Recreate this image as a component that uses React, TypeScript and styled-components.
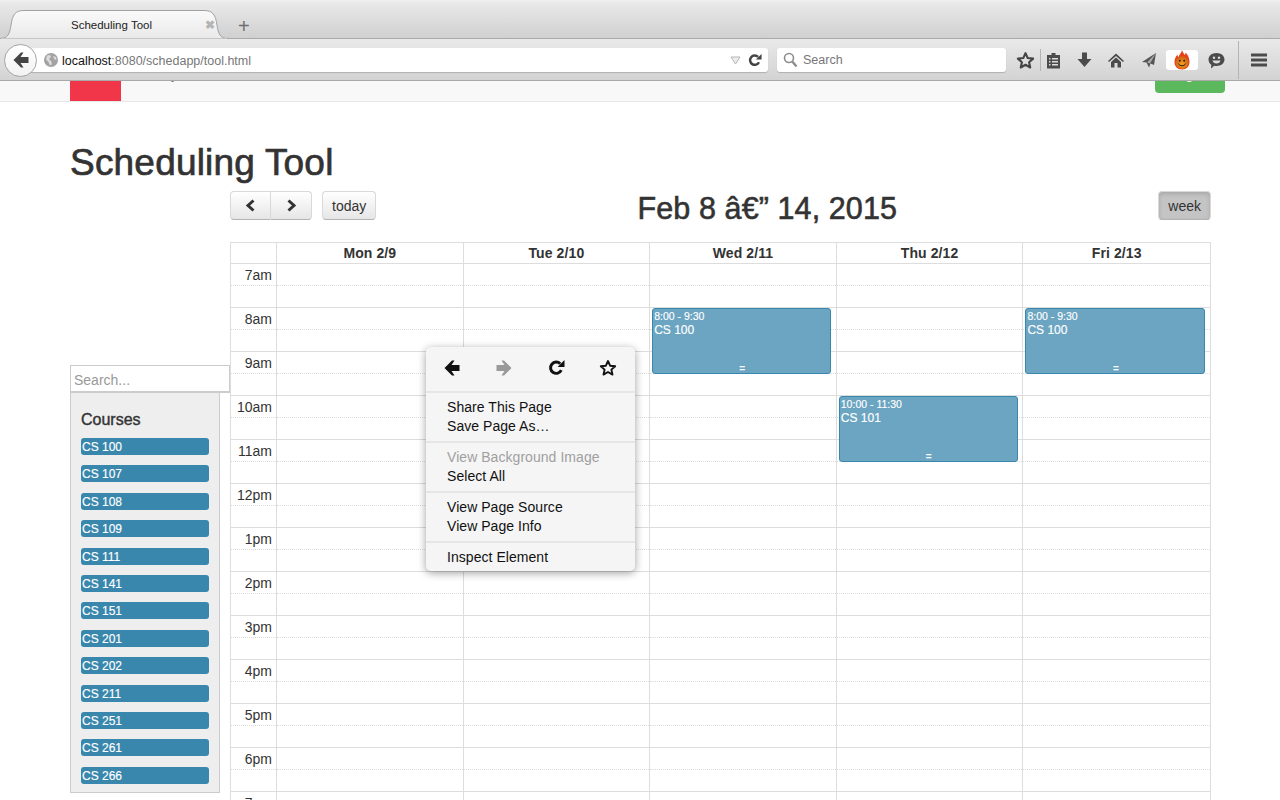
import React from 'react';
import styled, { createGlobalStyle } from 'styled-components';

const GlobalStyle = createGlobalStyle`
  html, body {
    margin: 0;
    padding: 0;
    height: 800px;
    overflow: hidden;
    background: #fff;
    font-family: 'Liberation Sans', Arial, sans-serif;
    color: #333;
  }
  * { box-sizing: border-box; }
`;

const Screen = styled.div`
  width: 1280px;
  height: 800px;
  overflow: hidden;
  position: relative;
`;

/* browser chrome */
const TabStrip = styled.div`
  height: 39px;
  display: flex;
  align-items: flex-end;
  background: linear-gradient(#f0f0f0 0, #e9e9e9 3px, #d0d0d0 100%);
  border-bottom: 1px solid #a9a9a9;
`;

const Tab = styled.div`
  position: relative;
  width: 228px;
  height: 29px;
  margin-bottom: -1px;
  display: flex;
  align-items: center;
  font-size: 11.5px;
  color: #222;
  padding-left: 71px;
`;

const TabShape = styled.svg`
  position: absolute;
  left: 0;
  top: 0;
`;

const TabTitle = styled.span`
  position: relative;
  flex: 1;
`;

const TabClose = styled.span`
  position: relative;
  width: 10px;
  margin-right: 13px;
  color: #b4b4b4;
  font-size: 12px;
  font-weight: bold;
  line-height: 10px;
`;

const NewTab = styled.span`
  margin: 0 0 2px 10px;
  width: 14px;
  height: 20px;
  color: #6d6d6d;
  font-size: 20px;
  line-height: 20px;
`;

const Toolbar = styled.div`
  height: 42px;
  display: flex;
  align-items: center;
  padding: 1px 0 0 4px;
  background: linear-gradient(#e9e9e9, #d3d3d3);
  border-bottom: 1px solid #a9a9a9;
`;

const BackCircle = styled.div`
  position: relative;
  z-index: 1;
  width: 33px;
  height: 33px;
  margin-right: -8px;
  flex: none;
  display: flex;
  align-items: center;
  justify-content: center;
  border-radius: 50%;
  background: linear-gradient(#fff, #f2f2f2);
  border: 1px solid #a5a5a5;
`;

const UrlBar = styled.div`
  width: 739px;
  height: 24px;
  flex: none;
  display: flex;
  align-items: center;
  padding: 0 6px 0 15px;
  background: #fff;
  border-radius: 0 3px 3px 0;
  box-shadow: 0 1px 1px rgba(0, 0, 0, 0.18);
  font-size: 12.5px;
  color: #777;
`;

const UrlText = styled.span`
  flex: 1;
  margin-left: 4px;
  padding-top: 1px;
  b {
    font-weight: normal;
    color: #111;
  }
`;

const SearchBar = styled.div`
  width: 229px;
  height: 24px;
  margin-left: 9px;
  flex: none;
  display: flex;
  align-items: center;
  gap: 5px;
  padding-left: 6px;
  background: #fff;
  border-radius: 3px;
  box-shadow: 0 1px 1px rgba(0, 0, 0, 0.18);
  font-size: 12.5px;
  color: #777;
`;

const ToolIcons = styled.div`
  flex: 1;
  display: flex;
  align-items: center;
  height: 100%;
  padding-left: 4px;
`;

const ToolSlot = styled.div<{ $w: number; $ml?: number }>`
  width: ${(p) => p.$w}px;
  margin-left: ${(p) => p.$ml || 0}px;
  height: 24px;
  flex: none;
  display: flex;
  align-items: center;
  justify-content: center;
`;

const ToolDivider = styled.div<{ $h: number; $ml?: number }>`
  width: 1px;
  margin-left: ${(p) => p.$ml || 0}px;
  height: ${(p) => p.$h}px;
  flex: none;
  background: #b4b4b4;
`;

const HolaBox = styled.div`
  width: 32px;
  height: 20px;
  flex: none;
  display: flex;
  align-items: center;
  justify-content: center;
  background: #fff;
  border-radius: 3px;
`;

/* page nav, scrolled mostly out of view */
const NavBar = styled.div`
  height: 21px;
  overflow: hidden;
  background: #f8f8f8;
  border-bottom: 1px solid #e7e7e7;
`;

const NavInner = styled.div`
  margin-top: -30px;
  padding: 0 55px 0 70px;
  display: flex;
  align-items: flex-start;
`;

const Logo = styled.div`
  width: 51px;
  height: 50px;
  background: #f1364a;
  color: #fff;
  font-size: 24px;
  font-weight: bold;
  text-align: center;
  line-height: 44px;
`;

const NavLinks = styled.div`
  flex: 1;
  padding: 15px 0 0 12px;
  font-size: 14px;
  color: #777;
`;

const LoginButton = styled.div`
  width: 70px;
  height: 42px;
  padding-right: 6px;
  background: #5cb85c;
  border-radius: 0 0 4px 4px;
  color: #fff;
  font-size: 14px;
  text-align: center;
  line-height: 46px;
`;

/* page */
const Page = styled.div`
  padding: 0 69px 0 70px;
`;

const Title = styled.h1`
  margin: 41px 0 8px;
  height: 40px;
  font-size: 37px;
  line-height: 40px;
  font-weight: normal;
  letter-spacing: 0.2px;
  -webkit-text-stroke: 0.7px #333;
  color: #333;
`;

const Columns = styled.div`
  display: flex;
  align-items: flex-start;
`;

const Sidebar = styled.div`
  width: 160px;
  flex: none;
  margin-top: 174px;
`;

const SearchInput = styled.input`
  display: block;
  width: 160px;
  height: 28px;
  padding: 2px 3px 0;
  border: 1px solid #ccc;
  border-bottom-width: 2px;
  outline: none;
  font-family: inherit;
  font-size: 14px;
  &::placeholder {
    color: #999;
  }
`;

const CoursePanel = styled.div`
  width: 150px;
  height: 400px;
  padding: 18px 10px 0;
  background: #eee;
  border: 1px solid #ccc;
  border-width: 0 1px 1px;
`;

const PanelHeading = styled.h4`
  margin: 0 0 9px;
  font-size: 16px;
  line-height: 18px;
  font-weight: normal;
  -webkit-text-stroke: 0.4px #333;
`;

const CourseItem = styled.div`
  height: 17px;
  margin-bottom: 10.42px;
  padding-left: 1px;
  background: #3a87ad;
  border-radius: 3px;
  color: #fff;
  font-size: 12px;
  line-height: 18px;
  -webkit-text-stroke: 0.15px #fff;
`;

const Calendar = styled.div`
  width: 981px;
  flex: none;
`;

const CalToolbar = styled.div`
  height: 51px;
  display: flex;
  align-items: flex-start;
  justify-content: space-between;
`;

const ToolGroup = styled.div`
  display: flex;
  gap: 10px;
`;

const ButtonPair = styled.div`
  display: flex;
`;

const CalButton = styled.div<{ $active?: boolean; $side?: 'left' | 'right' }>`
  height: 29px;
  padding: 0 9px;
  display: flex;
  align-items: center;
  justify-content: center;
  font-size: 14px;
  color: #333;
  border: 1px solid #d9d9d9;
  border-bottom-color: #b3b3b3;
  border-radius: ${(p) => (p.$side === 'left' ? '4px 0 0 4px' : p.$side === 'right' ? '0 4px 4px 0' : '4px')};
  background: ${(p) => (p.$active ? '#c4c4c4' : 'linear-gradient(#fff, #e6e6e6)')};
  box-shadow: ${(p) => (p.$active ? 'inset 0 2px 4px rgba(0,0,0,.15)' : 'inset 0 1px 0 rgba(255,255,255,.2)')};
  ${(p) => p.$side && 'width: 41px; padding: 0;'}
  ${(p) => p.$side === 'right' && 'border-left: 0;'}
`;

const RangeTitle = styled.h2`
  margin: 0;
  font-size: 30.5px;
  line-height: 35px;
  font-weight: normal;
  letter-spacing: 0.1px;
  -webkit-text-stroke: 0.6px #333;
  color: #333;
`;

const Grid = styled.div`
  border: 1px solid #ddd;
  border-bottom: 0;
`;

const HeadRow = styled.div`
  display: grid;
  grid-template-columns: 45px repeat(4, 186.6px) 1fr;
  height: 21px;
  border-bottom: 1px solid #ddd;
`;

const HeadCell = styled.div`
  border-left: 1px solid #ddd;
  text-align: center;
  font-size: 14px;
  line-height: 21px;
  font-weight: bold;
  letter-spacing: 0.1px;
  color: #333;
`;

const Body = styled.div`
  display: grid;
  grid-template-columns: 45px repeat(4, 186.6px) 1fr;
`;

const TimeCol = styled.div`
  min-width: 0;
`;

const DayCol = styled.div`
  position: relative;
  min-width: 0;
  border-left: 1px solid #ddd;
`;

const Slot = styled.div<{ $half: boolean }>`
  height: 22px;
  border-bottom: 1px ${(p) => (p.$half ? 'dotted' : 'solid')} #ddd;
  padding-right: 4px;
  text-align: right;
  font-size: 14px;
  line-height: 22px;
  color: #333;
`;

const CalEvent = styled.div<{ $top: number; $height: number }>`
  position: absolute;
  top: ${(p) => p.$top}px;
  left: 2px;
  right: 4.6px;
  height: ${(p) => p.$height}px;
  padding: 1px;
  background: #6ba5c2;
  border: 1px solid #3a87ad;
  border-radius: 3px;
  color: #fff;
`;

const EventTime = styled.div`
  font-size: 10.5px;
  line-height: 12px;
  -webkit-text-stroke: 0.15px #fff;
`;

const EventName = styled.div`
  font-size: 12px;
  line-height: 17px;
  -webkit-text-stroke: 0.15px #fff;
`;

const Resizer = styled.div`
  position: absolute;
  left: 1px;
  right: 0;
  bottom: -1px;
  text-align: center;
  font-size: 10px;
  font-weight: bold;
  line-height: 10px;
`;

/* context menu */
const Menu = styled.div`
  position: absolute;
  left: 426px;
  top: 347px;
  width: 209px;
  height: 224px;
  background: #f5f5f5;
  border-radius: 5px;
  box-shadow: 0 2px 9px rgba(0, 0, 0, 0.38);
  font-size: 14px;
  color: #111;
`;

const MenuIcons = styled.div`
  height: 46px;
  padding-bottom: 3px;
  display: grid;
  grid-template-columns: repeat(4, 52px);
  align-items: center;
  justify-items: center;
  border-bottom: 2px solid #e6e6e6;
`;

const MenuGroup = styled.div<{ $last?: boolean }>`
  padding: 5px 0;
  border-bottom: ${(p) => (p.$last ? '0' : '2px solid #e6e6e6')};
`;

const MenuItem = styled.div<{ $disabled?: boolean }>`
  height: 19px;
  padding-left: 21px;
  line-height: 19px;
  letter-spacing: 0.05px;
  color: ${(p) => (p.$disabled ? '#a0a0a0' : '#111')};
`;

/* icons */
const BackArrow = ({ size = 18, color = '#444' }: { size?: number; color?: string }) => (
  <svg width={size} height={size} viewBox="0 0 18 18">
    <path d="M9 1.500 1.500 9 9 16.500h2.500L8.500 12H16.500V6H8.500l3-4.500z" fill={color} />
  </svg>
);

const ForwardArrow = ({ color }: { color: string }) => (
  <svg width="18" height="18" viewBox="0 0 18 18">
    <path d="M9 1.500 16.500 9 9 16.500H6.500l3-4.500H1.500V6h8l-3-4.500z" fill={color} />
  </svg>
);

const Reload = ({ size, color }: { size: number; color: string }) => (
  <svg width={size} height={size} viewBox="0 0 16 16">
    <path d="M12.500 10.500A5.300 5.300 0 1 1 11.500 4.500" fill="none" stroke={color} strokeWidth="2.800" />
    <path d="M9 7.500 15.500 7.500 15.500 1z" fill={color} />
  </svg>
);

const Star = ({ size, color, width }: { size: number; color: string; width: number }) => (
  <svg width={size} height={size} viewBox="0 0 18 18">
    <path
      d="M9 2l2.100 4.700 5.100.5-3.800 3.400 1.100 5L9 13l-4.500 2.600 1.100-5-3.800-3.400 5.100-.5z"
      fill="none"
      stroke={color}
      strokeWidth={width}
      strokeLinejoin="round"
    />
  </svg>
);

const Globe = () => (
  <svg width="14" height="14" viewBox="0 0 14 14">
    <circle cx="7" cy="7" r="7" fill="#a3a3a3" />
    <path d="M3 2.500 6 2l1 2-2 2 2 2 1 3-2 1.500L4.500 9 2 6.500zM9 3l3 1 .5 3-2-.5z" fill="#dcdcdc" />
  </svg>
);

const Dropmarker = () => (
  <svg width="11" height="9" viewBox="0 0 11 9" style={{ marginRight: 7 }}>
    <path d="M1 1h9L5.500 8z" fill="#eee" stroke="#b5b5b5" />
  </svg>
);

const Magnifier = () => (
  <svg width="15" height="16" viewBox="0 0 15 16">
    <circle cx="6" cy="6" r="4.500" fill="none" stroke="#8c8c8c" strokeWidth="1.600" />
    <path d="M9.500 9.800 13.500 14.500" stroke="#8c8c8c" strokeWidth="2.400" />
  </svg>
);

const Clipboard = () => (
  <svg width="15" height="17" viewBox="0 0 15 17">
    <path d="M1 3h4.500V1h4v2H14v13.500H1z" fill="#4b4b4b" />
    <path d="M3 6h1.500v1.500H3zM6 6h6v1.500H6zM3 9h1.500v1.500H3zM6 9h6v1.500H6zM3 12h1.500v1.500H3zM6 12h6v1.500H6z" fill="#ddd" />
  </svg>
);

const Download = () => (
  <svg width="15" height="16" viewBox="0 0 15 16">
    <path d="M5 0.500h5V7h4.500l-7 8-7-8H5z" fill="#4b4b4b" />
  </svg>
);

const Home = () => (
  <svg width="16" height="15" viewBox="0 0 16 15">
    <path d="M8 0.500 16 8l-1 1-7-6-7 6-1-1z" fill="#4b4b4b" />
    <path d="M8 4.500 13 9v5.500H9.500V10h-3v4.500H3V9z" fill="#4b4b4b" />
  </svg>
);

const PaperPlane = () => (
  <svg width="16" height="16" viewBox="0 0 16 16">
    <path d="M15 1 1 10l4.500 .5L8 15.500l1.500-4 3.500 1.500z" fill="#555" />
    <path d="M15 1 6 10.500l3 1z" fill="#aaa" />
  </svg>
);

const HolaFlame = () => (
  <svg width="16" height="20" viewBox="0 0 16 20">
    <defs>
      <radialGradient id="holaFace" cx="50%" cy="60%" r="60%">
        <stop offset="0%" stopColor="#f7a11d" />
        <stop offset="100%" stopColor="#cf5a12" />
      </radialGradient>
    </defs>
    <path
      d="M8 0c.5 2.500 2 3 2.500 5 .8-.5 1-1.500 1-2.500C13.500 4.500 15.500 7.500 15.500 12c0 4.500-3 7.500-7.500 7.500S.5 16.500.5 12C.5 8.500 2 6.500 3.500 4.500c0 1.200.3 2 1 2.500C5 4.500 7.500 3 8 0z"
      fill="#e8401b"
    />
    <circle cx="8" cy="12.500" r="6.500" fill="url(#holaFace)" />
    <circle cx="5.800" cy="10.800" r="1" fill="#222" />
    <circle cx="10.200" cy="10.800" r="1" fill="#222" />
    <path d="M4.500 13.500c1 3 6 3 7 0" fill="none" stroke="#222" strokeWidth="1" />
  </svg>
);

const ChatFace = () => (
  <svg width="17" height="17" viewBox="0 0 17 17">
    <path d="M8.500 1C13 1 16.500 3.800 16.500 7.500S13 14 8.500 14c-.8 0-1.500-.1-2.200-.2L3 16.500l.3-3.800C1.500 11.500.5 9.600.5 7.500.5 3.800 4 1 8.500 1z" fill="#4b4b4b" />
    <circle cx="6" cy="5.800" r="1.200" fill="#ddd" />
    <circle cx="11" cy="5.800" r="1.200" fill="#ddd" />
    <path d="M4.500 8.500h8c-.5 2-2 3-4 3s-3.500-1-4-3z" fill="#ddd" />
  </svg>
);

const Hamburger = () => (
  <svg width="16" height="14" viewBox="0 0 16 14">
    <path d="M0 0.500h16v3H0zM0 5.500h16v3H0zM0 10.500h16v3H0z" fill="#4b4b4b" />
  </svg>
);

const Chevron = ({ flip }: { flip?: boolean }) => (
  <svg width="11" height="13" viewBox="0 0 11 13">
    <path d={flip ? 'M2.500 1.500 8 6.500l-5.500 5' : 'M8.500 1.500 3 6.500l5.500 5'} fill="none" stroke="#333" strokeWidth="3" />
  </svg>
);

const courses = ['100', '107', '108', '109', '111', '141', '151', '201', '202', '211', '251', '261', '266'];
const hours = ['7am', '8am', '9am', '10am', '11am', '12pm', '1pm', '2pm', '3pm', '4pm', '5pm', '6pm', '7pm'];
const days = ['Mon 2/9', 'Tue 2/10', 'Wed 2/11', 'Thu 2/12', 'Fri 2/13'];

const events: Record<string, { time: string; name: string; top: number }[]> = {
  'Wed 2/11': [{ time: '8:00 - 9:30', name: 'CS 100', top: 44 }],
  'Thu 2/12': [{ time: '10:00 - 11:30', name: 'CS 101', top: 132 }],
  'Fri 2/13': [{ time: '8:00 - 9:30', name: 'CS 100', top: 44 }],
};

const App: React.FC = () => {
  return (
    <Screen>
      <GlobalStyle />

      <TabStrip>
        <Tab>
          <TabShape width="228" height="29" viewBox="0 0 228 29">
            <defs>
              <linearGradient id="tabFill" x1="0" y1="0" x2="0" y2="1">
                <stop offset="0%" stopColor="#fafafa" />
                <stop offset="100%" stopColor="#e9e9e9" />
              </linearGradient>
            </defs>
            <path
              d="M0 28.500C8 28.500 9.500 24 11 15 12.500 5 15 .5 24 .5H204c9 0 11.500 4.500 13 14.500 1.500 9 3 13.500 11 13.500z"
              fill="url(#tabFill)"
              stroke="#a2a2a2"
            />
            <path d="M1 28.500h226v1H1z" fill="#e9e9e9" />
          </TabShape>
          <TabTitle>Scheduling Tool</TabTitle>
          <TabClose>✖</TabClose>
        </Tab>
        <NewTab>+</NewTab>
      </TabStrip>

      <Toolbar>
        <BackCircle>
          <BackArrow />
        </BackCircle>
        <UrlBar>
          <Globe />
          <UrlText>
            <b>localhost</b>:8080/schedapp/tool.html
          </UrlText>
          <Dropmarker />
          <Reload size={14} color="#444" />
        </UrlBar>
        <SearchBar>
          <Magnifier />
          Search
        </SearchBar>
        <ToolIcons>
          <ToolSlot $w={30}>
            <Star size={19} color="#444" width={2} />
          </ToolSlot>
          <ToolDivider $h={22} />
          <ToolSlot $w={24}>
            <Clipboard />
          </ToolSlot>
          <ToolSlot $w={38}>
            <Download />
          </ToolSlot>
          <ToolSlot $w={26}>
            <Home />
          </ToolSlot>
          <ToolSlot $w={34} $ml={3}>
            <PaperPlane />
          </ToolSlot>
          <HolaBox>
            <HolaFlame />
          </HolaBox>
          <ToolSlot $w={36}>
            <ChatFace />
          </ToolSlot>
          <ToolDivider $h={38} $ml={4} />
          <ToolSlot $w={40}>
            <Hamburger />
          </ToolSlot>
        </ToolIcons>
      </Toolbar>

      <NavBar>
        <NavInner>
          <Logo>CIS</Logo>
          <NavLinks>Faculty</NavLinks>
          <LoginButton>Login</LoginButton>
        </NavInner>
      </NavBar>

      <Page>
        <Title>Scheduling Tool</Title>
        <Columns>
          <Sidebar>
            <SearchInput placeholder="Search..." />
            <CoursePanel>
              <PanelHeading>Courses</PanelHeading>
              {courses.map((c) => (
                <CourseItem key={c}>CS {c}</CourseItem>
              ))}
            </CoursePanel>
          </Sidebar>

          <Calendar>
            <CalToolbar>
              <ToolGroup>
                <ButtonPair>
                  <CalButton $side="left">
                    <Chevron />
                  </CalButton>
                  <CalButton $side="right">
                    <Chevron flip />
                  </CalButton>
                </ButtonPair>
                <CalButton>today</CalButton>
              </ToolGroup>
              <RangeTitle>Feb 8 â€” 14, 2015</RangeTitle>
              <CalButton $active>week</CalButton>
            </CalToolbar>

            <Grid>
              <HeadRow>
                <div />
                {days.map((d) => (
                  <HeadCell key={d}>{d}</HeadCell>
                ))}
              </HeadRow>
              <Body>
                <TimeCol>
                  {hours.map((h) => (
                    <React.Fragment key={h}>
                      <Slot $half>{h}</Slot>
                      <Slot $half={false} />
                    </React.Fragment>
                  ))}
                </TimeCol>
                {days.map((d) => (
                  <DayCol key={d}>
                    {hours.map((h) => (
                      <React.Fragment key={h}>
                        <Slot $half />
                        <Slot $half={false} />
                      </React.Fragment>
                    ))}
                    {(events[d] || []).map((e) => (
                      <CalEvent key={e.name} $top={e.top} $height={66}>
                        <EventTime>{e.time}</EventTime>
                        <EventName>{e.name}</EventName>
                        <Resizer>=</Resizer>
                      </CalEvent>
                    ))}
                  </DayCol>
                ))}
              </Body>
            </Grid>
          </Calendar>
        </Columns>
      </Page>

      <Menu>
        <MenuIcons>
          <BackArrow size={18} color="#111" />
          <ForwardArrow color="#999" />
          <Reload size={17} color="#111" />
          <Star size={18} color="#111" width={1.9} />
        </MenuIcons>
        <MenuGroup>
          <MenuItem>Share This Page</MenuItem>
          <MenuItem>Save Page As…</MenuItem>
        </MenuGroup>
        <MenuGroup>
          <MenuItem $disabled>View Background Image</MenuItem>
          <MenuItem>Select All</MenuItem>
        </MenuGroup>
        <MenuGroup>
          <MenuItem>View Page Source</MenuItem>
          <MenuItem>View Page Info</MenuItem>
        </MenuGroup>
        <MenuGroup $last>
          <MenuItem>Inspect Element</MenuItem>
        </MenuGroup>
      </Menu>
    </Screen>
  );
};

export default App;
